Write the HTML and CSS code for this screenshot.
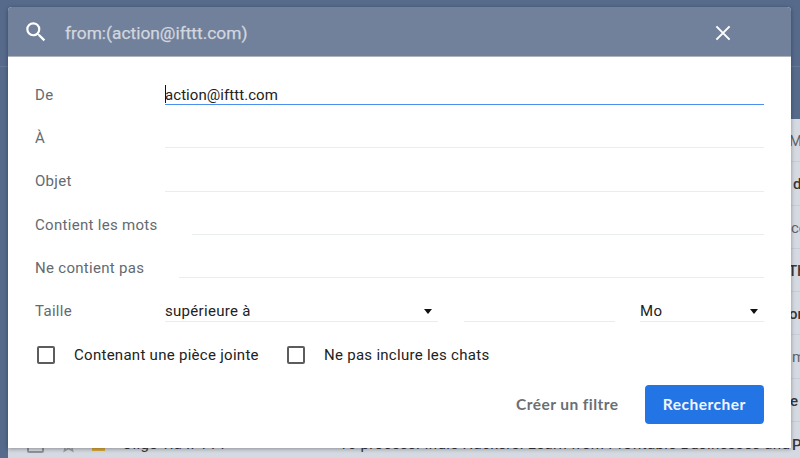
FILE: index.html
```html
<!DOCTYPE html>
<html lang="fr">
<head>
<meta charset="utf-8">
<title>Recherche</title>
<link rel="stylesheet" href="styles.css">
</head>
<body>
<div class="app">
  <div class="topline"></div>
  <div class="mail-list">
    <div class="mail read"><span class="end e1">M</span></div>
    <div class="mail"><span class="end e2">d</span></div>
    <div class="mail read"><span class="end e3">co</span></div>
    <div class="mail"><span class="end e4">Th</span></div>
    <div class="mail"><span class="end e5">on</span></div>
    <div class="mail read"><span class="end e6">m</span></div>
    <div class="mail"><span class="end e7">e</span></div>
    <div class="mail last">
      <span class="mail-box"></span>
      <svg class="star" viewBox="0 0 24 24"><path d="M12 3l2.7 6.3 6.8.6-5.200 4.500 1.600 6.700L12 17.500l-5.900 3.600 1.600-6.700L2.500 9.900l6.800-.6z"/></svg>
      <span class="marker"></span>
      <span class="sender">Oligo via IFTTT</span>
      <span class="subject">10 process. Indie Hackers: Learn from Profitable Businesses and</span>
      <span class="end e8">P</span>
    </div>
  </div>

  <form class="search">
    <header class="search-head">
      <svg class="glass" viewBox="0 0 24 24"><path d="M15.500 14h-.79l-.28-.27A6.470 6.470 0 0 0 16 9.500 6.500 6.500 0 1 0 9.500 16c1.610 0 3.090-.59 4.230-1.570l.27.280v.79l5 4.990L20.490 19l-4.990-5zm-6 0a4.500 4.500 0 1 1 0-9 4.500 4.500 0 0 1 0 9z"/></svg>
      <span class="query">from:(action@ifttt.com)</span>
      <svg class="close" viewBox="0 0 16 16"><path d="M1.400 1.400l13.200 13.200M14.600 1.400L1.400 14.600"/></svg>
    </header>
    <div class="search-body">
      <div class="row"><span class="label">De</span><span class="field active"><i class="caret"></i><span class="address">action@ifttt.com</span></span></div>
      <div class="row"><span class="label">À</span><span class="field"></span></div>
      <div class="row"><span class="label">Objet</span><span class="field"></span></div>
      <div class="row"><span class="label words">Contient les mots</span><span class="field"></span></div>
      <div class="row"><span class="label without">Ne contient pas</span><span class="field"></span></div>
      <div class="row"><span class="label">Taille</span>
        <span class="field select compare"><span class="compare-text">supérieure à</span><i class="arrow"></i></span>
        <span class="field amount"></span>
        <span class="field select unit">Mo<i class="arrow"></i></span>
      </div>
      <div class="checks">
        <span class="check"></span><span class="check-text attach">Contenant une pièce jointe</span>
        <span class="check"></span><span class="check-text chats">Ne pas inclure les chats</span>
      </div>
      <div class="actions">
        <span class="create">Créer un filtre</span>
        <span class="submit">Rechercher</span>
      </div>
    </div>
  </form>
</div>
</body>
</html>
```
FILE: styles.css
```css
* { box-sizing: border-box; }
body { margin: 0; font-family: Roboto, sans-serif; }
.app { position: relative; width: 800px; height: 458px; overflow: hidden; background: #566a8b; }
.topline { height: 67px; border-bottom: 1px solid #65779a; }
.mail-list { margin: 52px 0 0 8px; background: #d5d9e1; }
.mail { position: relative; height: 43.3px; border-bottom: 1px solid #c6cdd6; display: flex; align-items: center; font-size: 15px; color: #34373b; white-space: nowrap; }
.read { color: #60656c; }
.end { position: absolute; top: 12px; line-height: 20px; }
.e1 { left: 781px; }
.e2 { left: 785px; font-weight: 500; }
.e3 { left: 783px; }
.e4 { left: 780px; font-weight: 500; }
.e5 { left: 781px; font-weight: 500; }
.e6 { left: 784px; }
.e7 { left: 782px; font-weight: 500; }
.e8 { left: 784px; top: 13px; font-weight: 500; }
.mail-box { width: 17px; height: 17px; margin: 3px 16px 0 19px; border: 2px solid #8f9399; border-radius: 2px; }
.star { width: 17px; height: 17px; margin-top: 2px; fill: none; stroke: #999da3; stroke-width: 2; }
.marker { width: 13px; height: 9px; margin: 6px 17px 0 15px; background: #d8a83c; }
.sender { width: 217px; padding-top: 2px; letter-spacing: .3px; }
.subject { padding-top: 2px; letter-spacing: .33px; }

.search { position: absolute; left: 8px; top: 7px; width: 783px; height: 441px; margin: 0; border-radius: 4px 4px 0 0; background: #fff; box-shadow: 0 1px 4px rgba(0, 0, 0, .35); }
.search-head { height: 50px; padding: 0 60px 0 15px; display: flex; align-items: center; background: #72819b; border-bottom: 1px solid #aeb3bc; border-radius: 4px 4px 0 0; }
.glass { width: 26px; height: 26px; margin-top: 1px; fill: #fff; }
.query { margin: 3px auto 0 16px; font-size: 17.35px; line-height: 22px; color: #d2d7df; -webkit-text-stroke: .25px #d2d7df; }
.close { width: 16px; height: 16px; margin-top: 2px; stroke: #fff; stroke-width: 2; fill: none; }
.search-body { padding: 4.750px 27px 0; font-size: 15px; letter-spacing: .3px; color: #222; }
.row { display: flex; align-items: flex-end; height: 43.300px; }
.label { width: 130px; line-height: 20px; margin-bottom: .4px; color: #646a70; white-space: nowrap; }
.words { width: 157px; }
.without { width: 144px; }
.field { flex: 1; height: 20px; line-height: 20px; border-bottom: 1px solid #e9edee; white-space: nowrap; }
.active { position: relative; border-bottom-color: #4b8ff0; }
.address { letter-spacing: .06px; }
.caret { position: absolute; left: 0; top: 0; width: 1px; height: 18px; background: #111; }
.select { display: flex; justify-content: space-between; align-items: center; padding-right: 6px; }
.compare { flex: 0 0 273px; }
.amount { flex: 0 0 151px; margin: 0 25.500px; }
.arrow { border: 4.500px solid transparent; border-top: 5px solid #111; border-bottom: 0; }
.checks { display: flex; align-items: center; height: 20px; margin-top: 23.200px; line-height: 20px; }
.check { width: 18px; height: 18px; margin: 0 19px 0 2px; border: 2px solid #5c5c5c; border-radius: 2px; }
.check-text { letter-spacing: .28px; }
.attach { width: 211px; }
.actions { display: flex; justify-content: flex-end; align-items: center; margin-top: 20px; font-family: Lato, sans-serif; font-size: 15.500px; font-weight: 700; letter-spacing: .5px; }
.create { margin-right: 26px; letter-spacing: .45px; color: #6a6f75; }
.submit { width: 119.500px; height: 39px; line-height: 39px; text-align: center; background: #2375e5; border-radius: 4px; color: #f1f6fe; }
```
